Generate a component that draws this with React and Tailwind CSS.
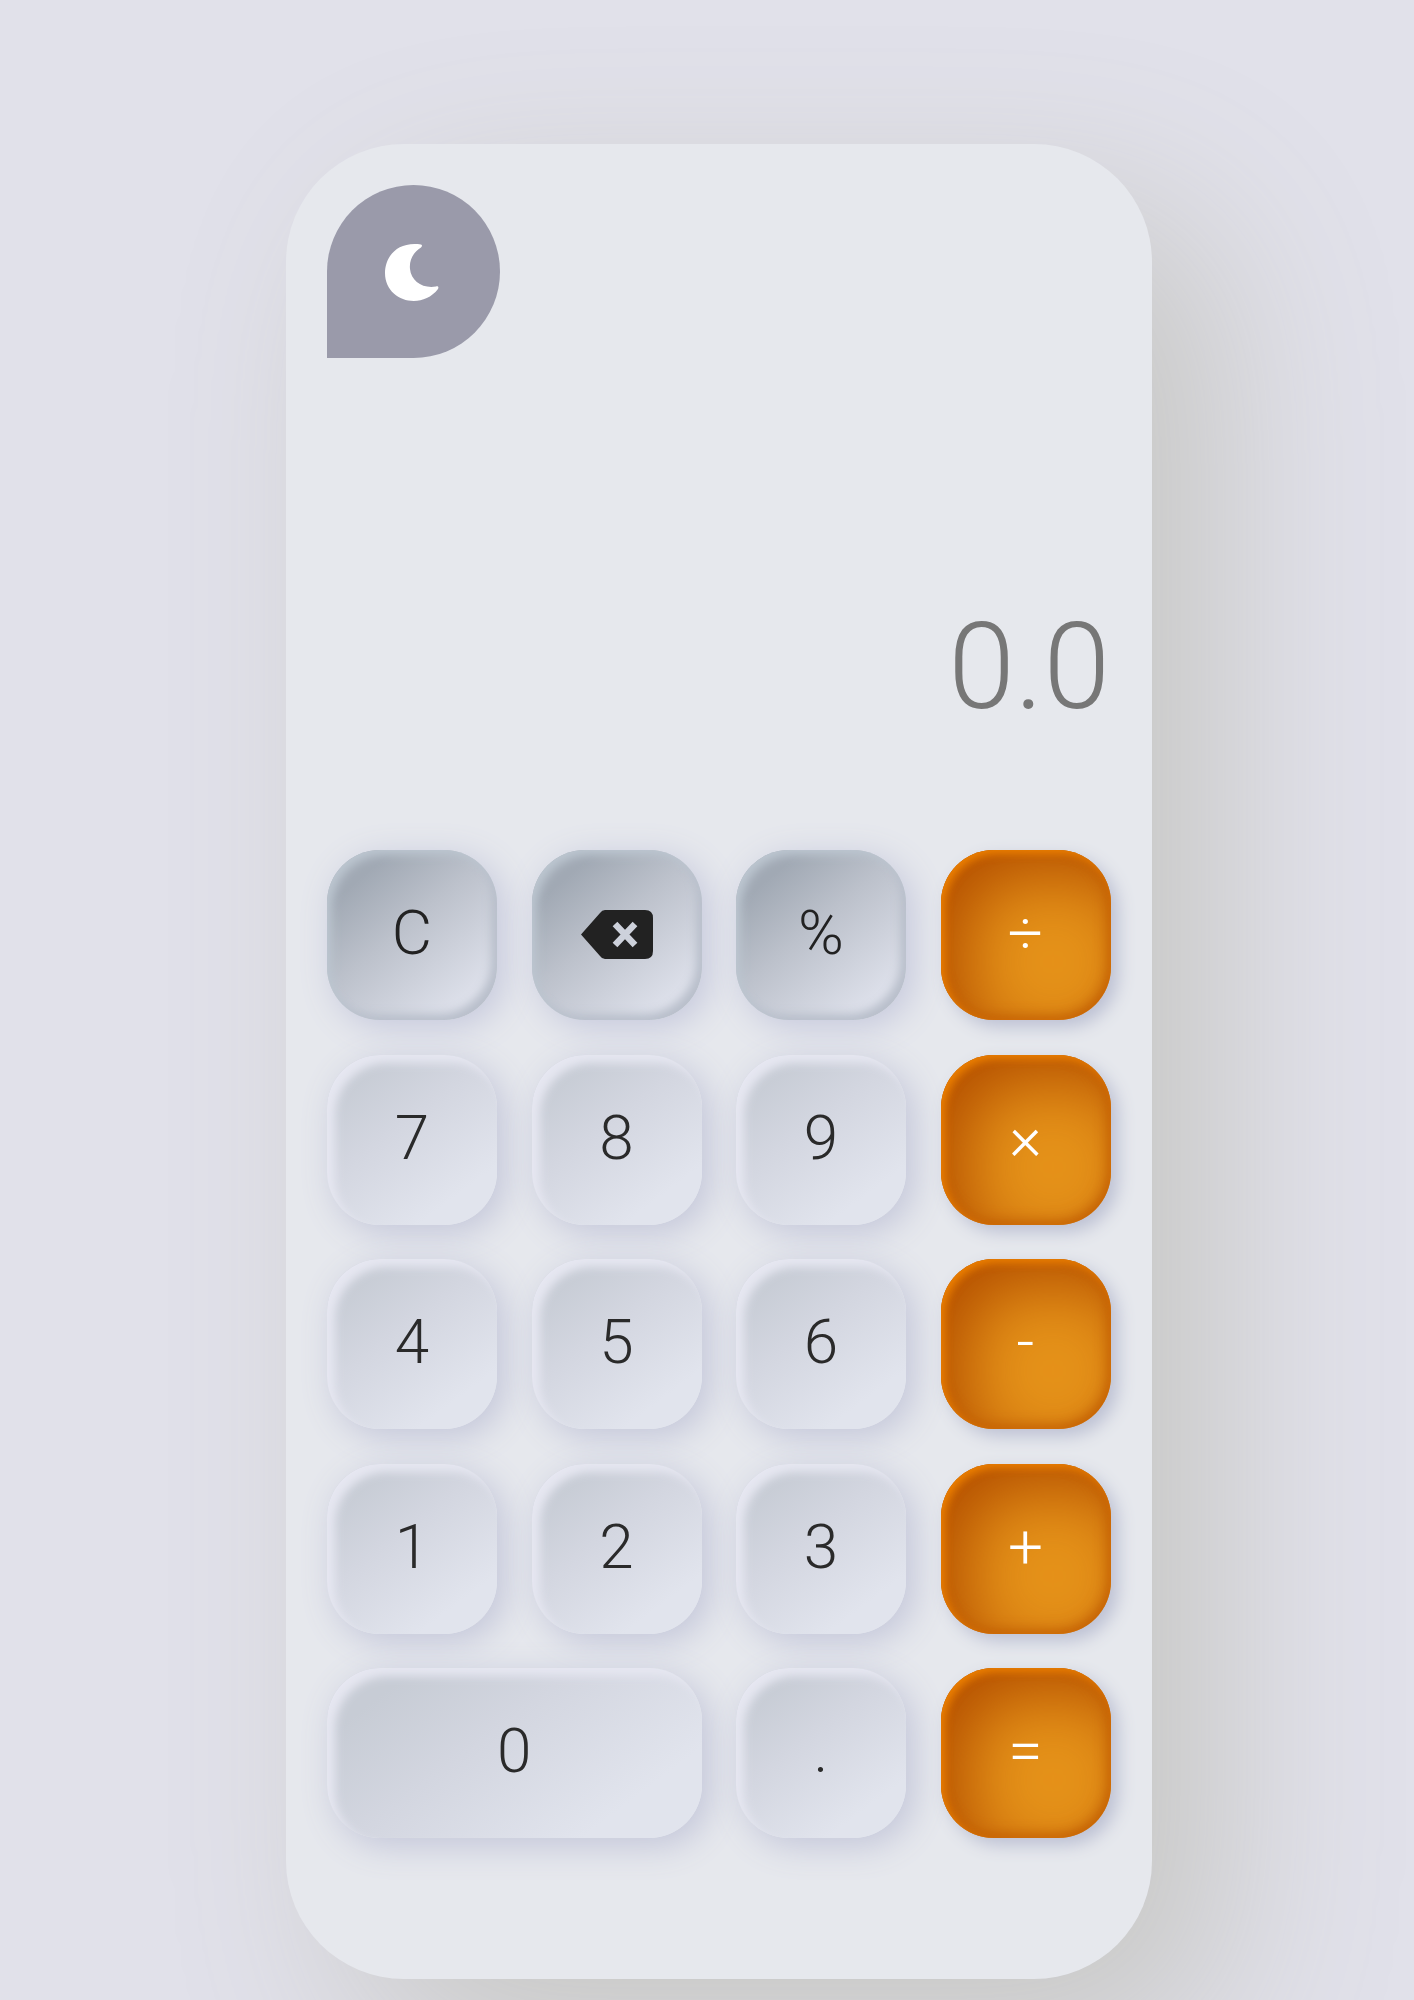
import React from 'react';

const keys = [
  ['C', 'fn'], ['⌫', 'fn'], ['%', 'fn'], ['÷', 'op'],
  ['7', 'num'], ['8', 'num'], ['9', 'num'], ['×', 'op'],
  ['4', 'num'], ['5', 'num'], ['6', 'num'], ['-', 'op'],
  ['1', 'num'], ['2', 'num'], ['3', 'num'], ['+', 'op'],
  ['0', 'num'], ['.', 'num'], ['=', 'op'],
];

const styles = {
  fn: 'text-[#222] bg-[linear-gradient(140deg,#a1a9b4_18%,#bcc1cb_45%,#dde0ea_85%)] shadow-[7px_7px_34px_#c5c8dc,inset_5px_5px_10px_#bcc6d0,inset_-6px_-6px_10px_#b9bfcb]',
  num: 'text-[#2a2a2a] bg-[linear-gradient(143deg,#c7ccd5_15%,#d3d6e0_42%,#e1e4ed_80%)] shadow-[8px_8px_34px_#c3c6d9,inset_8px_8px_10px_#e6e7f1]',
  op: 'text-white bg-[#e59219] shadow-[7px_7px_17px_#bcc0d3,inset_4px_4px_9px_#ec7f00,inset_-3px_-3px_14px_#c05e04,inset_27px_27px_68px_#b45000]',
};

function Backspace() {
  return (
    <svg viewBox="0 0 72 49" className="mt-[3px] ml-[1px] h-[49px] w-[72px]" role="img" aria-label="Delete">
      <path d="M24 0H64Q72 0 72 8V41Q72 49 64 49H24Q21 49 19 46L0 24.5L19 3Q21 0 24 0Z" fill="#222" />
      <path d="M34 14L54 35M54 14L34 35" stroke="#cdd1db" strokeWidth="6.5" />
    </svg>
  );
}

export default function App() {
  return (
    <div className="h-[2000px] overflow-hidden bg-[#e1e1ea] pt-[144px] pl-[286px] font-['Roboto',sans-serif] font-light">
      <main className="h-[1835px] w-[866px] rounded-[118px] bg-[#e6e8ed] px-[41px] pt-[41px] shadow-[68px_68px_185px_#c7c7c4]">
        <button aria-label="Dark mode" className="flex size-[173px] items-center justify-center rounded-full rounded-bl-none bg-[#9a9aaa]">
          <svg viewBox="0 0 54 58" className="mt-[2px] mr-[4px] h-[58px] w-[54px]">
            <path d="M36 0.5C12-3 0 13 0 29C0 57 36 67 53 45C54 43 53 42 51 42.5C38 45 26 37 25 25C24 15 29 8 36 3.5Q38 1.5 36 0.5Z" fill="white" />
          </svg>
        </button>
        <div className="mt-[239px] h-[140px] pr-[1px] text-right text-[120px] leading-[140px] text-[#777]">0.0</div>
        <div className="mt-[113px] grid grid-cols-[repeat(4,170px)] gap-[34.5px]">
          {keys.map(([k, kind]) => (
            <button
              key={k}
              className={`flex h-[170px] items-center justify-center rounded-[53px] pb-[5px] text-[62px] ${styles[kind]} ${k === '0' ? 'col-span-2' : ''}`}
            >
              {k === '⌫' ? <Backspace /> : k}
            </button>
          ))}
        </div>
      </main>
    </div>
  );
}
